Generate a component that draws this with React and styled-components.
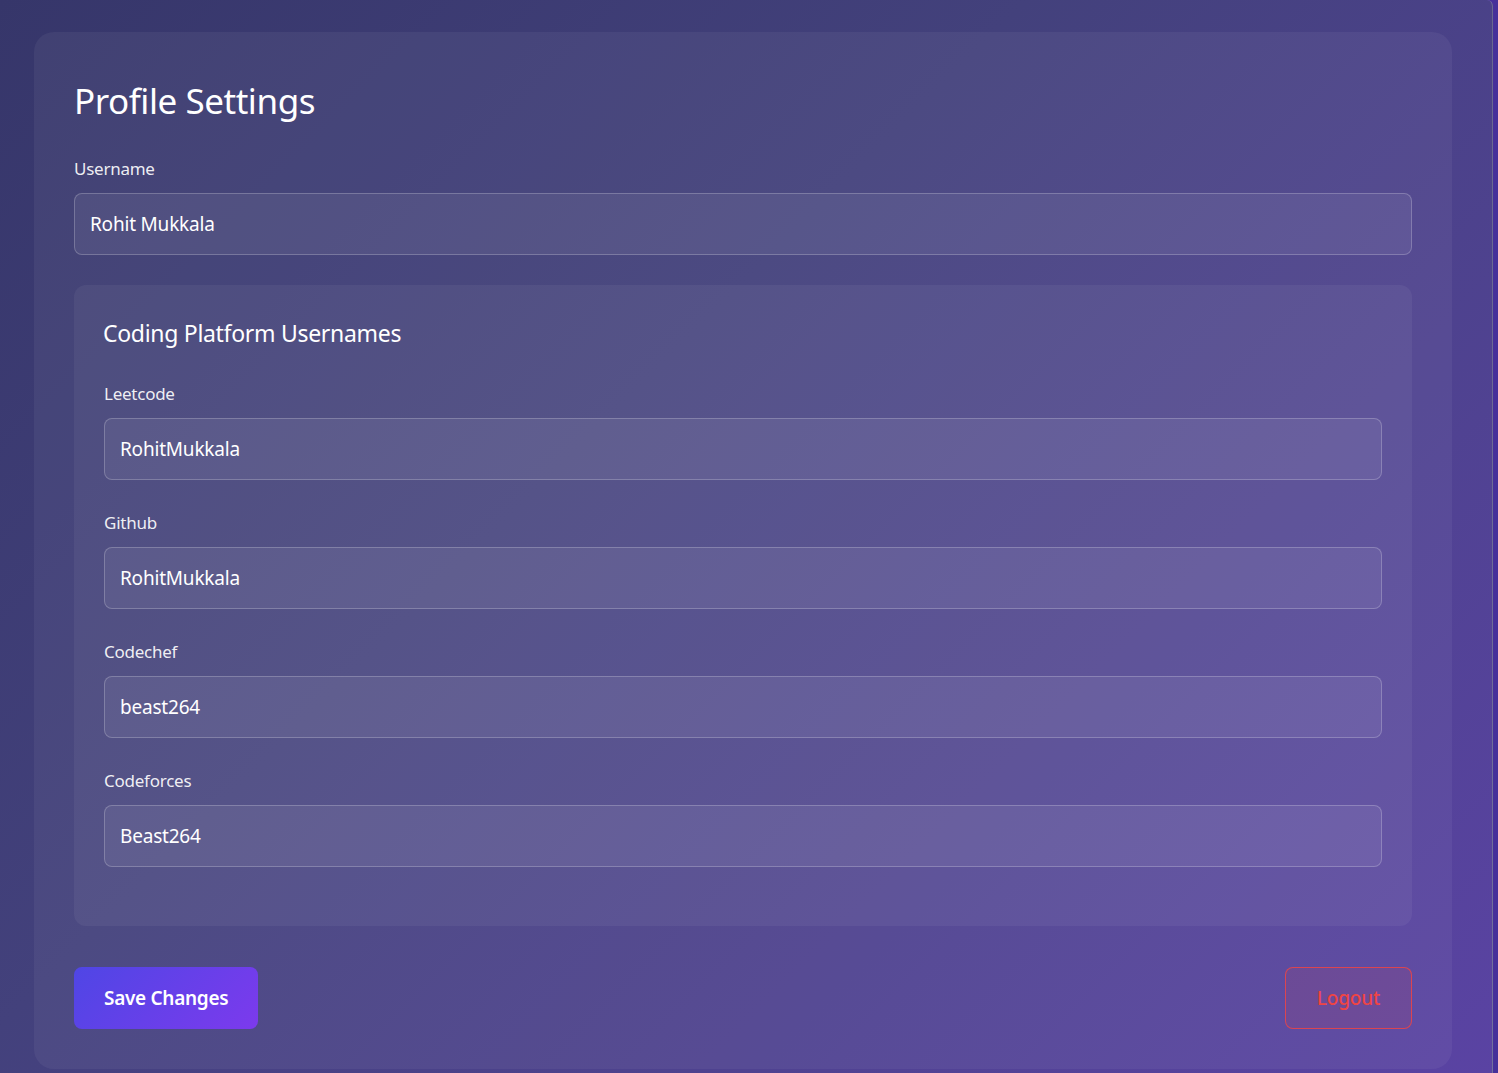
import React, { useState } from 'react';
import styled, { createGlobalStyle } from 'styled-components';

const GlobalStyle = createGlobalStyle`
  * {
    box-sizing: border-box;
  }
  body {
    margin: 0;
    background: #46309a;
    font-family: "Noto Sans", "Open Sans", sans-serif;
  }
`;

const Page = styled.div`
  width: calc(100% - 5px);
  min-height: 1073px;
  padding: 32px 40px 5px 34px;
  background: linear-gradient(135deg, #36366a 0%, #43417c 40%, #5a43a3 100%);
  border-right: 1px solid rgba(255, 255, 255, 0.25);
  border-top-right-radius: 6px;
`;

const Card = styled.section`
  background: rgba(255, 255, 255, 0.05);
  border-radius: 20px;
  padding: 40px;
  color: #fff;
`;

const Title = styled.h1`
  margin: 9px 0 36px;
  font-size: 35px;
  line-height: 40px;
  font-weight: 400;
  letter-spacing: -0.45px;
`;

const Field = styled.div`
  display: flex;
  flex-direction: column;
  gap: 12px;
  margin-bottom: ${(p) => p.$gap || 0}px;
`;

const Label = styled.label`
  font-size: 17px;
  line-height: 24px;
  color: rgba(255, 255, 255, 0.92);
  letter-spacing: -0.25px;
`;

const Input = styled.input`
  height: 62px;
  width: 100%;
  padding: 0 15px;
  border-radius: 8px;
  border: 1px solid rgba(255, 255, 255, 0.22);
  background: rgba(255, 255, 255, 0.065);
  color: #fff;
  font-family: inherit;
  font-size: 19px;
  letter-spacing: -0.2px;
  outline: none;
`;

const Platforms = styled.div`
  margin-top: 30px;
  background: rgba(255, 255, 255, 0.05);
  border-radius: 12px;
  padding: 32px 30px 28px;
`;

const SubTitle = styled.h2`
  margin: 0 0 33px -1px;
  font-size: 23px;
  line-height: 32px;
  font-weight: 400;
  letter-spacing: -0.3px;
`;

const Actions = styled.div`
  margin-top: 41px;
  display: flex;
  justify-content: space-between;
  align-items: center;
`;

const SaveButton = styled.button`
  height: 62px;
  padding: 0 30px;
  border: none;
  border-radius: 8px;
  background: linear-gradient(135deg, #4f46e5 0%, #7c3aed 100%);
  color: #fff;
  font-family: inherit;
  font-size: 19px;
  font-weight: 600;
  letter-spacing: -0.3px;
  cursor: pointer;
`;

const LogoutButton = styled.button`
  height: 62px;
  padding: 0 31px;
  border-radius: 8px;
  border: 1px solid rgba(239, 68, 68, 0.85);
  background: rgba(239, 68, 68, 0.1);
  color: #ef4444;
  font-family: inherit;
  font-size: 19px;
  font-weight: 500;
  letter-spacing: -0.2px;
  cursor: pointer;
`;

const platforms = [
  { key: 'leetcode', label: 'Leetcode', value: 'RohitMukkala' },
  { key: 'github', label: 'Github', value: 'RohitMukkala' },
  { key: 'codechef', label: 'Codechef', value: 'beast264' },
  { key: 'codeforces', label: 'Codeforces', value: 'Beast264' },
];

const App = () => {
  const [username, setUsername] = useState('Rohit Mukkala');
  const [handles, setHandles] = useState(
    Object.fromEntries(platforms.map((p) => [p.key, p.value]))
  );

  return (
    <>
      <GlobalStyle />
      <Page>
        <Card>
          <Title>Profile Settings</Title>
          <Field>
            <Label htmlFor="username">Username</Label>
            <Input id="username" value={username} onChange={(e) => setUsername(e.target.value)} />
          </Field>
          <Platforms>
            <SubTitle>Coding Platform Usernames</SubTitle>
            {platforms.map((p) => (
              <Field key={p.key} $gap={31}>
                <Label htmlFor={p.key}>{p.label}</Label>
                <Input
                  id={p.key}
                  value={handles[p.key]}
                  onChange={(e) => setHandles({ ...handles, [p.key]: e.target.value })}
                />
              </Field>
            ))}
          </Platforms>
          <Actions>
            <SaveButton>Save Changes</SaveButton>
            <LogoutButton>Logout</LogoutButton>
          </Actions>
        </Card>
      </Page>
    </>
  );
};

export default App;
